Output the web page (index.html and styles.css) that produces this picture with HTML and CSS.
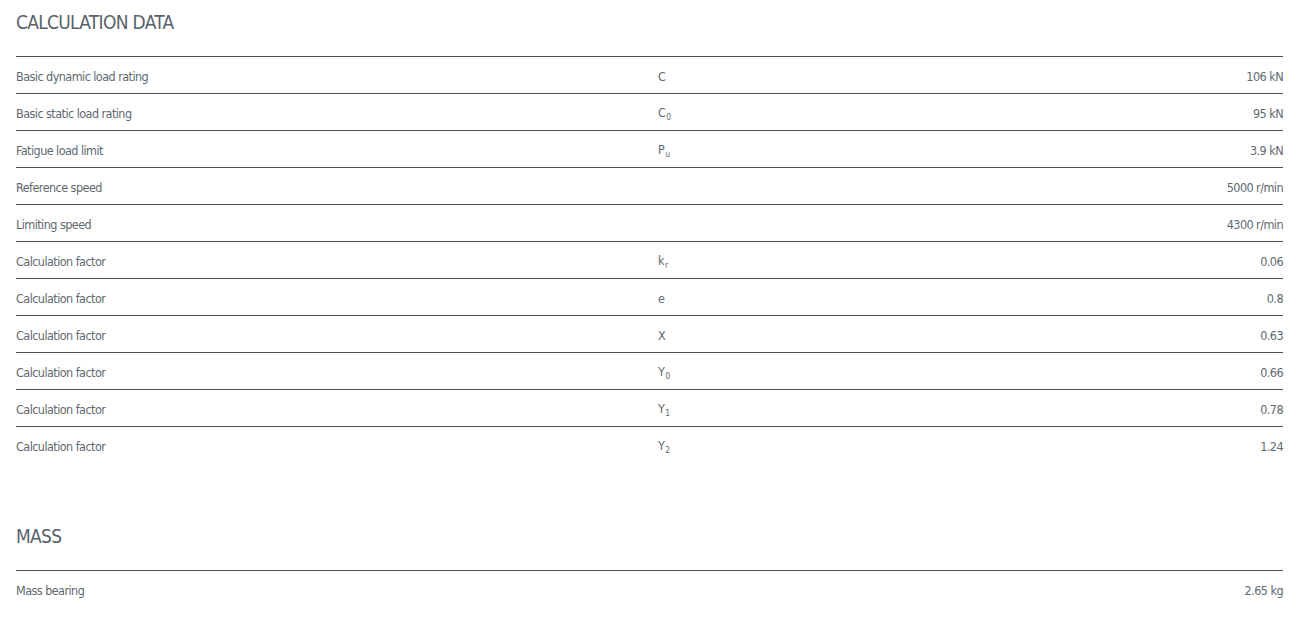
FILE: index.html
```html
<!DOCTYPE html>
<html>
<head>
<meta charset="utf-8">
<link rel="stylesheet" href="styles.css">
</head>
<body>
<div class="page">
  <section class="block">
    <h2 class="title">CALCULATION DATA</h2>
    <div class="table">
      <div class="row"><span class="name">Basic dynamic load rating</span><span class="sym">C</span><span class="val">106 kN</span></div>
      <div class="row"><span class="name">Basic static load rating</span><span class="sym">C<sub>0</sub></span><span class="val">95 kN</span></div>
      <div class="row"><span class="name">Fatigue load limit</span><span class="sym">P<sub>u</sub></span><span class="val">3.9 kN</span></div>
      <div class="row"><span class="name">Reference speed</span><span class="sym"></span><span class="val">5000 r/min</span></div>
      <div class="row"><span class="name">Limiting speed</span><span class="sym"></span><span class="val">4300 r/min</span></div>
      <div class="row"><span class="name">Calculation factor</span><span class="sym">k<sub>r</sub></span><span class="val">0.06</span></div>
      <div class="row"><span class="name">Calculation factor</span><span class="sym">e</span><span class="val">0.8</span></div>
      <div class="row"><span class="name">Calculation factor</span><span class="sym">X</span><span class="val">0.63</span></div>
      <div class="row"><span class="name">Calculation factor</span><span class="sym">Y<sub>0</sub></span><span class="val">0.66</span></div>
      <div class="row"><span class="name">Calculation factor</span><span class="sym">Y<sub>1</sub></span><span class="val">0.78</span></div>
      <div class="row"><span class="name">Calculation factor</span><span class="sym">Y<sub>2</sub></span><span class="val">1.24</span></div>
    </div>
  </section>
  <section class="block block-mass">
    <h2 class="title">MASS</h2>
    <div class="table">
      <div class="row"><span class="name">Mass bearing</span><span class="sym"></span><span class="val">2.65 kg</span></div>
    </div>
  </section>
</div>
</body>
</html>
```

FILE: styles.css
```css
html, body {
  margin: 0;
  padding: 0;
  background: #ffffff;
}
body {
  font-family: "DejaVu Sans Condensed", "Liberation Sans", sans-serif;
  color: #60696f;
}
.page {
  padding: 10px 19px 0 16px;
}
.title {
  margin: 0 0 22px 0;
  font-size: 19px;
  line-height: 24px;
  font-weight: normal;
  letter-spacing: -0.7px;
  color: #58626a;
}
.block-mass {
  margin-top: 61px;
}
.row {
  display: grid;
  grid-template-columns: 642px 1fr auto;
  align-items: center;
  box-sizing: border-box;
  height: 37px;
  padding-top: 2px;
  border-top: 1px solid #485058;
  font-size: 12.5px;
  letter-spacing: -0.55px;
}
.sym sub {
  font-size: 8.5px;
  vertical-align: -3px;
  margin-left: 1px;
}
.val {
  text-align: right;
}
```
